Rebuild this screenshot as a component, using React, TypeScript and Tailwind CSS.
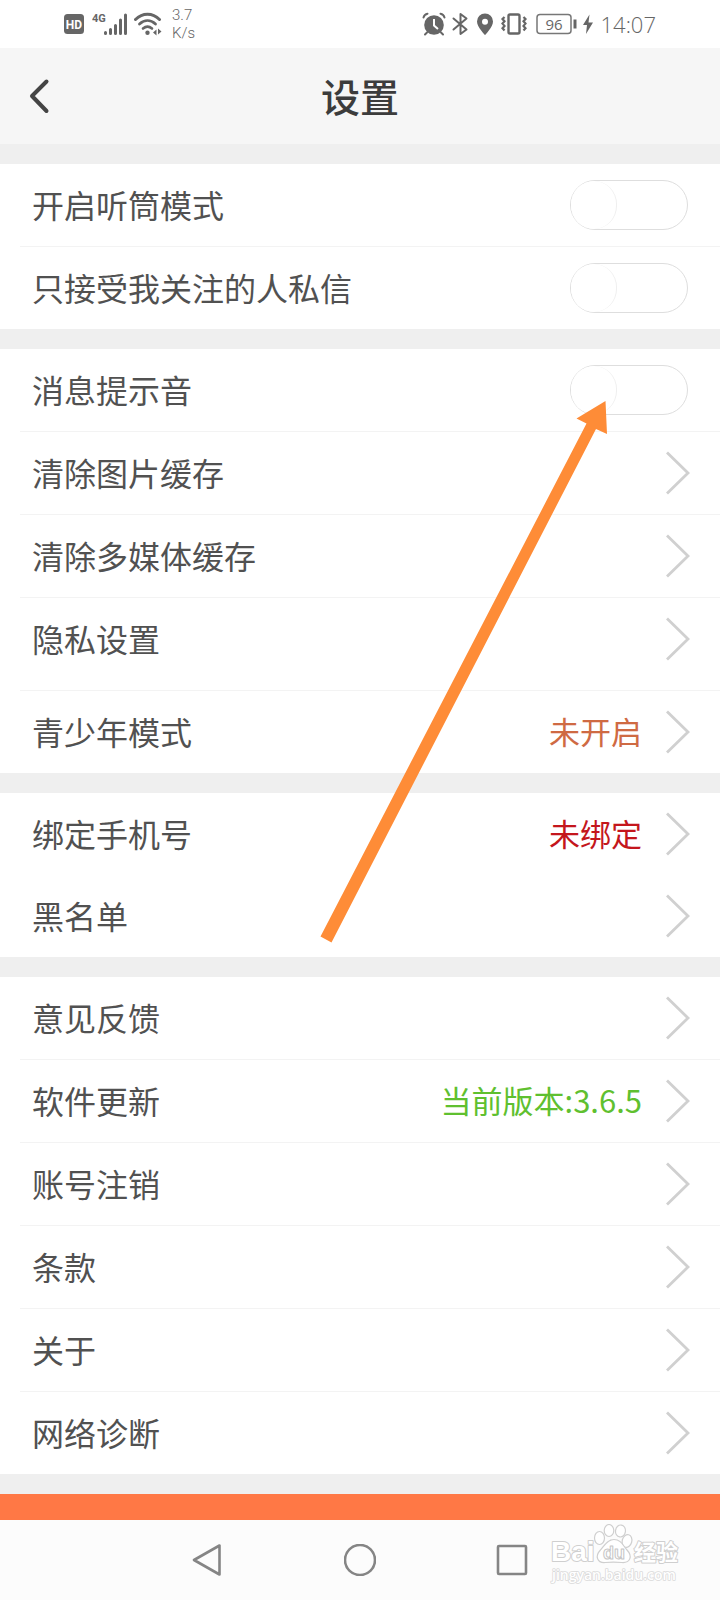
import type { ReactNode } from "react";

type Row = {
  label: string;
  kind?: "switch";
  value?: string;
  tone?: string;
  border?: boolean;
  tall?: boolean;
};

const groups: Row[][] = [
  [
    { label: "开启听筒模式", kind: "switch", border: true },
    { label: "只接受我关注的人私信", kind: "switch" },
  ],
  [
    { label: "消息提示音", kind: "switch", border: true },
    { label: "清除图片缓存", border: true },
    { label: "清除多媒体缓存", border: true },
    { label: "隐私设置", border: true, tall: true },
    { label: "青少年模式", value: "未开启", tone: "text-[#cf6a43]" },
  ],
  [
    { label: "绑定手机号", value: "未绑定", tone: "text-[#c4161c]" },
    { label: "黑名单" },
  ],
  [
    { label: "意见反馈", border: true },
    { label: "软件更新", value: "当前版本:3.6.5", tone: "text-[#5fc02f]", border: true },
    { label: "账号注销", border: true },
    { label: "条款", border: true },
    { label: "关于", border: true },
    { label: "网络诊断" },
  ],
];

function Chevron() {
  return (
    <svg className="h-11 w-6 shrink-0" viewBox="0 0 24 44" fill="none" stroke="#d0d0d0" strokeWidth="2.8" aria-hidden="true">
      <path d="M1 1.5 22 22 1 42.5" />
    </svg>
  );
}

function SettingRow({ row }: { row: Row }) {
  const line = "flex h-[82px] w-full items-center pl-8 text-left";
  const label = <span className="flex-1 pb-[2px] text-[32px] leading-10 text-[#515151]">{row.label}</span>;
  return (
    <li>
      {row.kind === "switch" ? (
        <label className={`${line} pr-8`}>
          {label}
          <input
            type="checkbox"
            role="switch"
            className="block h-[50px] w-[118px] shrink-0 appearance-none rounded-full border border-[#dedede] bg-white before:block before:h-12 before:w-[46px] before:rounded-full before:border-r before:border-[#efefef] before:bg-white before:content-[''] checked:bg-[#ff7845] checked:before:ml-[70px]"
          />
        </label>
      ) : (
        <button type="button" className={`${line} pr-[30px]`}>
          {label}
          {row.value && (
            <span className={`mr-6 pb-[2px] text-[31px] leading-10 ${row.tone}`}>{row.value}</span>
          )}
          <Chevron />
        </button>
      )}
      {row.tall && <div className="h-[10px]" />}
      {row.border && <div className="ml-5 h-px bg-[#f3f3f3]" />}
    </li>
  );
}

function StatusBar() {
  return (
    <div className="flex h-12 items-center justify-between bg-white px-16 text-[#666]">
      <div className="flex items-center">
        <svg className="h-6 w-5" viewBox="0 0 20 24" aria-label="HD">
          <rect y="2" width="20" height="20" rx="3.5" fill="#666" />
          <text x="10" y="16.5" textAnchor="middle" fontSize="12" fontWeight="700" fill="#fff" fontFamily="Roboto, sans-serif">HD</text>
        </svg>
        <svg className="ml-2 h-6 w-9" viewBox="0 0 36 24" aria-label="4G">
          <text x="0" y="10" fontSize="11" fontWeight="700" fill="#666" fontFamily="Roboto, sans-serif">4G</text>
          <path d="M13.5 21.5v-1M18.5 21.5v-4M23.5 21.5v-8M28.5 21.5V8M33.5 21.5V3" stroke="#666" strokeWidth="3" strokeLinecap="round" />
        </svg>
        <svg className="ml-1.5 h-6 w-7" viewBox="0 0 28 24" fill="none" stroke="#666" aria-hidden="true">
          <path d="M1.5 7.5C8.5.5 18.5.5 25.5 7.5" strokeWidth="3" strokeLinecap="round" />
          <path d="M5.5 12C10.5 7.5 16.5 7.5 21.5 12" strokeWidth="2.8" strokeLinecap="round" />
          <path d="M9 16.5C12 14 15 14 18 16.5" strokeWidth="2.6" strokeLinecap="round" />
          <circle cx="13.5" cy="20.8" r="2.2" fill="#666" stroke="none" />
          <path d="m22.500 17.500-3.500 3 3.500 3zM24 16.500v6l3.500-3z" fill="#666" stroke="none" />
        </svg>
        <div className="ml-2.5 font-[Roboto] text-[15px] leading-[18px] font-light">
          <div>3.7</div>
          <div>K/s</div>
        </div>
      </div>
      <div className="flex items-center">
        <svg className="h-6 w-6" viewBox="0 0 24 24" fill="none" aria-label="闹钟">
          <circle cx="12" cy="13" r="9.8" fill="#666" />
          <path d="M1.5 5.5C2 3.5 3.5 2 5.5 1.7M22.5 5.5C22 3.5 20.5 2 18.5 1.7M5 20.5l-2 2M19 20.5l2 2" stroke="#666" strokeWidth="2" strokeLinecap="round" />
          <path d="M12 7v6.5l4 3.5" stroke="#fff" strokeWidth="2" />
        </svg>
        <svg className="ml-1.5 h-6 w-4" viewBox="0 0 16 24" fill="none" stroke="#666" strokeWidth="2" strokeLinejoin="round" strokeLinecap="round" aria-label="蓝牙">
          <path d="m1.5 6.500 13 11L8.500 22V2l6 4.500-13 11" />
        </svg>
        <svg className="ml-2 h-6 w-[18px]" viewBox="0 0 18 24" aria-label="定位">
          <path fillRule="evenodd" fill="#666" d="M9 1.5a8 8 0 0 0-8 8C1 15 9 23 9 23s8-8 8-13.5a8 8 0 0 0-8-8Zm0 5.2a3 3 0 1 1 0 6 3 3 0 0 1 0-6Z" />
        </svg>
        <svg className="ml-1.5 h-6 w-7" viewBox="0 0 28 24" fill="none" stroke="#666" aria-label="振动">
          <rect x="8.5" y="2.5" width="11" height="19" rx="1.5" strokeWidth="2.4" />
          <path d="m4.5 5-2 2 2 2.3-2 2.3 2 2.3-2 2.3 2 2.3M23.5 5l2 2-2 2.3 2 2.3-2 2.3 2 2.3-2 2.3" strokeWidth="2.2" />
        </svg>
        <svg className="ml-2 h-6 w-[41px]" viewBox="0 0 41 24" fill="none" aria-label="电量 96">
          <rect x="1" y="2.5" width="34" height="19" rx="3" stroke="#777" strokeWidth="1.5" />
          <path d="M39 7.5v9" stroke="#666" strokeWidth="3" />
          <text x="18" y="17.5" textAnchor="middle" fontSize="15" fill="#666" fontFamily="'Open Sans', sans-serif">96</text>
        </svg>
        <svg className="ml-1.5 h-6 w-[10px]" viewBox="0 0 10 24" aria-label="充电">
          <path d="M6.5 2.5 0 13h4l-1 9L10 10.5H5.500z" fill="#666" />
        </svg>
        <span className="ml-2 font-['Open_Sans'] text-[22px] leading-6 font-light">14:07</span>
      </div>
    </div>
  );
}

function NavButton({ label, children }: { label: string; children: ReactNode }) {
  return (
    <button type="button" aria-label={label} className="size-8">
      <svg className="size-8" viewBox="0 0 32 32" fill="none" stroke="#858585" strokeWidth="2.6" strokeLinejoin="round">
        {children}
      </svg>
    </button>
  );
}

function Watermark() {
  return (
    <svg
      className="absolute right-9 bottom-3 h-16 w-[134px]"
      viewBox="0 0 134 64"
      fill="#fff"
      stroke="#cfcfcf"
      strokeLinejoin="round"
      fontWeight="700"
    >
      <g strokeWidth="1.2">
        <text x="1" y="37" fontSize="28" strokeWidth="2" paintOrder="stroke" fontFamily="'Liberation Sans', sans-serif">Bai</text>
        <ellipse cx="49.5" cy="14" rx="5" ry="6.5" />
        <ellipse cx="59" cy="6.500" rx="4.8" ry="6" />
        <ellipse cx="70.5" cy="7" rx="5" ry="6" transform="rotate(8 70.5 7)" />
        <ellipse cx="77" cy="17" rx="4.8" ry="6.5" transform="rotate(15 77 17)" />
        <path d="M64 15.5c7 0 9 6 13 10.5 6 6.500 3 13-5 12.500-5-.4-12-.4-17 0-8 .5-10-6.500-5-12 4-4 7-11 14-11Z" />
        <text x="53" y="35" fontSize="18" stroke="#c6c6c6" strokeWidth="1" fontFamily="'Liberation Sans', sans-serif">du</text>
        <text x="84" y="36" fontSize="22" strokeWidth="2" paintOrder="stroke" fontFamily="'Noto Sans CJK SC', sans-serif">经验</text>
      </g>
      <text x="2" y="56" fontSize="14" fontWeight="600" strokeWidth="1.6" paintOrder="stroke" stroke="#dadada" fontFamily="'Open Sans', sans-serif">jingyan.baidu.com</text>
    </svg>
  );
}

export default function App() {
  return (
    <div className="relative min-h-screen overflow-hidden bg-[#efefef] font-['Noto_Sans_CJK_SC',sans-serif]">
      <StatusBar />
      <header className="grid h-24 grid-cols-[1fr_auto_1fr] items-center bg-[#f6f6f6] px-7">
        <button type="button" aria-label="返回" className="h-9 w-6">
          <svg className="h-9 w-6" viewBox="0 0 24 36" fill="none" stroke="#444" strokeWidth="4" strokeLinecap="round" strokeLinejoin="round">
            <path d="M18.5 3.500 4 18l14.500 15" />
          </svg>
        </button>
        <h1 className="pb-[2px] text-[39px] leading-[48px] font-medium text-[#3c3c3c]">设置</h1>
      </header>

      <main className="flex flex-col gap-5 py-5">
        {groups.map((rows) => (
          <ul key={rows[0].label} className="bg-white">
            {rows.map((row) => (
              <SettingRow key={row.label} row={row} />
            ))}
          </ul>
        ))}
      </main>

      <div className="h-[26px] bg-[#ff7845]" />
      <nav className="relative flex h-20 items-center justify-center gap-30 bg-[#fcfcfc]">
        <NavButton label="返回上一页">
          <path d="M27.5 1.5v29L2 16z" />
        </NavButton>
        <NavButton label="主屏幕">
          <circle cx="16" cy="16" r="15" />
        </NavButton>
        <NavButton label="最近任务">
          <rect x="2" y="2" width="28" height="28" rx="1" />
        </NavButton>
        <Watermark />
      </nav>

      <svg className="pointer-events-none absolute top-[400px] right-[110px] h-[544px] w-[290px]" viewBox="0 0 290 544" aria-hidden="true">
        <path d="M285.5 1 287 34 276 29 11.5 542.5 .5 536.5 266.5 23.5 256.5 18.5Z" fill="#fe8c37" />
      </svg>
    </div>
  );
}
